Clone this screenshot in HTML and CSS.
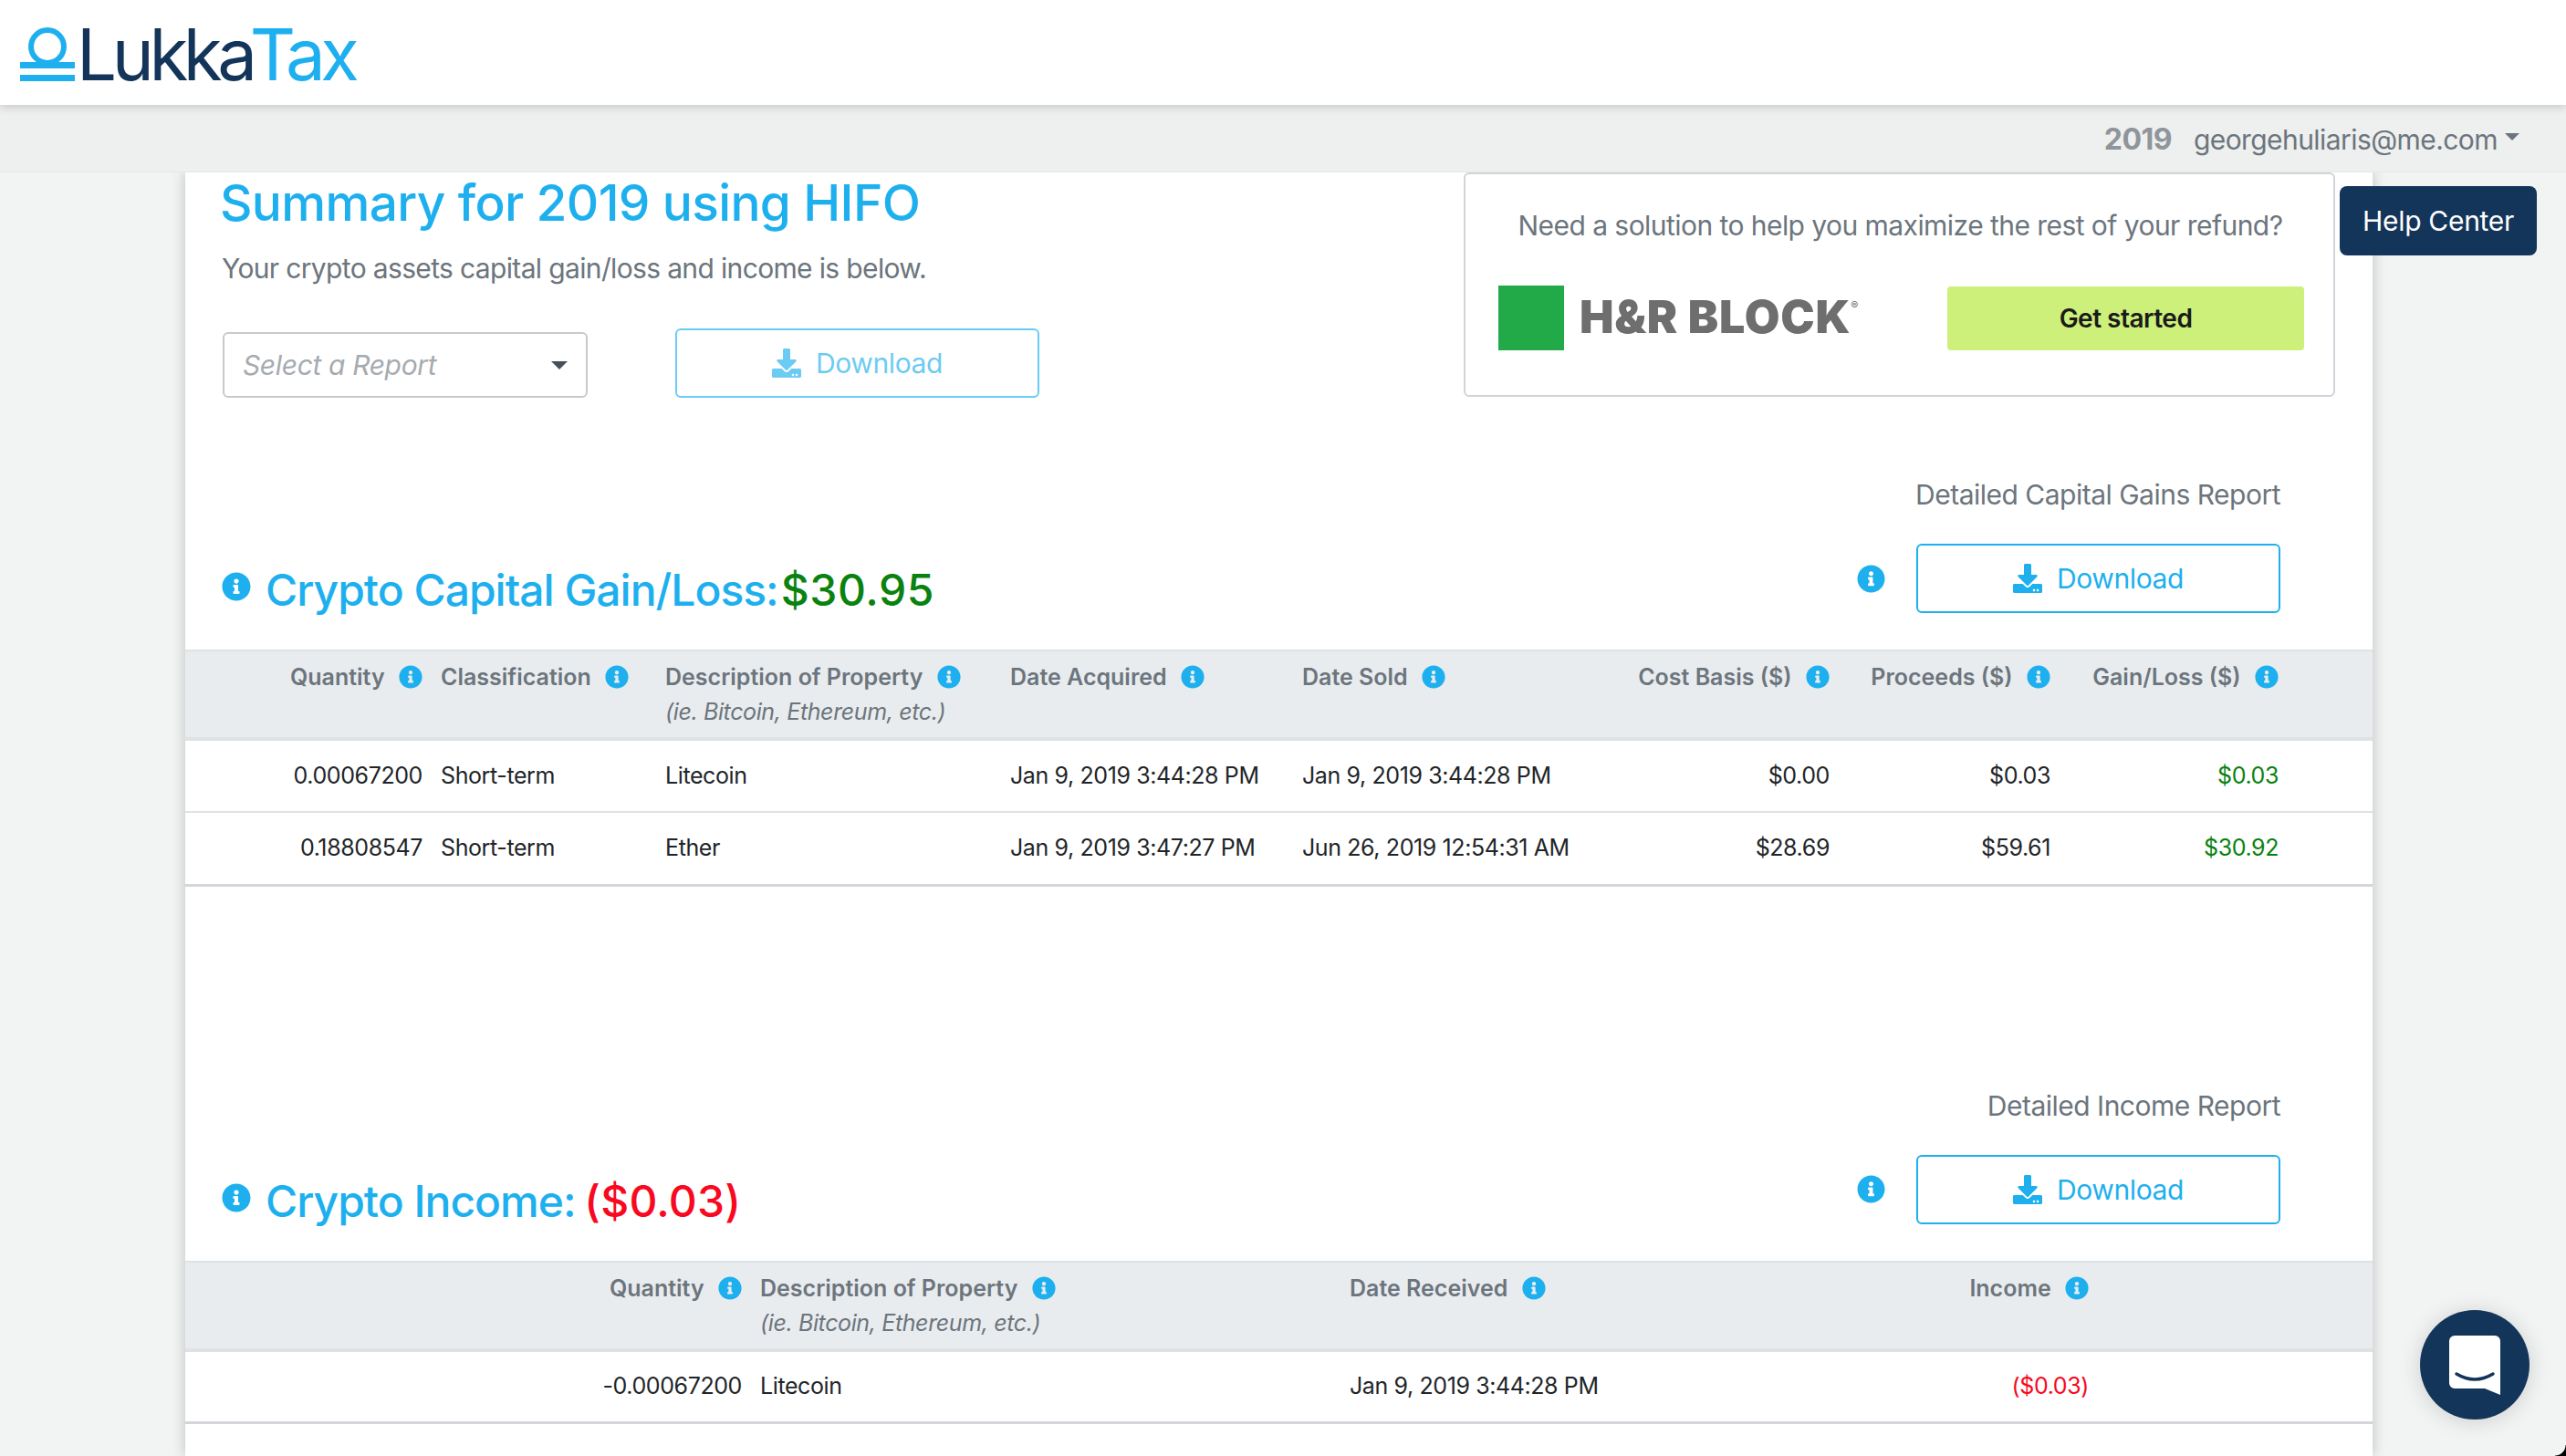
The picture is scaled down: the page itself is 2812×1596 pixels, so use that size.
FILE: index.html
```html
<!DOCTYPE html>
<html lang="en">
<head>
    <meta charset="UTF-8">
    <meta name="viewport" content="width=device-width, initial-scale=1.0">
    <title>LukkaTax</title>
    <link rel="stylesheet" href="styles.css">
</head>
<body>
    <svg class="defs" width="0" height="0">
        <symbol id="info" viewBox="0 0 512 512"><path d="M256 8C119.043 8 8 119.083 8 256c0 136.997 111.043 248 248 248s248-111.003 248-248C504 119.083 392.957 8 256 8zm0 110c23.196 0 42 18.804 42 42s-18.804 42-42 42-42-18.804-42-42 18.804-42 42-42zm56 254c0 6.627-5.373 12-12 12h-88c-6.627 0-12-5.373-12-12v-24c0-6.627 5.373-12 12-12h12v-64h-12c-6.627 0-12-5.373-12-12v-24c0-6.627 5.373-12 12-12h64c6.627 0 12 5.373 12 12v100h12c6.627 0 12 5.373 12 12v24z"/></symbol>
        <symbol id="download" viewBox="0 0 512 512"><path d="M216 0h80c13.3 0 24 10.7 24 24v168h87.7c17.8 0 26.7 21.5 14.1 34.1L269.7 378.3c-7.5 7.5-19.8 7.5-27.3 0L90.1 226.1c-12.6-12.6-3.7-34.1 14.1-34.1H192V24c0-13.3 10.7-24 24-24zm296 376v112c0 13.3-10.7 24-24 24H24c-13.3 0-24-10.7-24-24V376c0-13.3 10.7-24 24-24h146.7l49 49c20.1 20.1 52.5 20.1 72.6 0l49-49H488c13.3 0 24 10.7 24 24zm-124 88c0-11-9-20-20-20s-20 9-20 20 9 20 20 20 20-9 20-20zm64 0c0-11-9-20-20-20s-20 9-20 20 9 20 20 20 20-9 20-20z"/></symbol>
    </svg>

    <header class="brand-bar">
        <a class="logo">
            <svg class="logo-mark" viewBox="0 0 60 59">
                <circle cx="30" cy="21" r="18" fill="none" stroke="#1eb0ee" stroke-width="6"/>
                <rect x="0" y="38" width="60" height="7" fill="#1eb0ee"/>
                <rect x="0" y="52" width="60" height="7" fill="#1eb0ee"/>
            </svg>
            <span class="logo-text">Lukka<span class="logo-tax">Tax</span></span>
        </a>
    </header>

    <nav class="user-bar">
        <span class="user-year">2019</span>
        <span class="user-email">georgehuliaris@me.com</span>
        <span class="caret"></span>
    </nav>

    <main class="card">
        <div class="summary">
            <div class="summary-left">
                <h1 class="title">Summary for 2019 using HIFO</h1>
                <p class="lead">Your crypto assets capital gain/loss and income is below.</p>
                <div class="report-row">
                    <div class="select">
                        <span>Select a Report</span>
                        <span class="select-arrow"></span>
                    </div>
                    <button class="btn btn-disabled"><svg class="btn-icon"><use href="#download"/></svg>Download</button>
                </div>
            </div>
            <aside class="promo">
                <p class="promo-text">Need a solution to help you maximize the rest of your refund?</p>
                <div class="promo-row">
                    <div class="hrb">
                        <span class="hrb-square"></span>
                        <span class="hrb-name">H&amp;R BLOCK<sup>®</sup></span>
                    </div>
                    <button class="promo-btn">Get started</button>
                </div>
            </aside>
        </div>

        <section class="section section-gains">
            <div class="section-head">
                <h2 class="heading"><svg class="icon heading-icon"><use href="#info"/></svg>Crypto Capital Gain/Loss:<span class="gain">$30.95</span></h2>
                <div class="section-actions">
                    <div class="action-label">Detailed Capital Gains Report</div>
                    <div class="action-row">
                        <svg class="icon action-icon"><use href="#info"/></svg>
                        <button class="btn"><svg class="btn-icon"><use href="#download"/></svg>Download</button>
                    </div>
                </div>
            </div>
            <table class="table table-gains">
                <colgroup>
                    <col class="c270"><col class="c246"><col class="c378"><col class="c320"><col class="c350"><col class="c248"><col class="c242"><col class="c250"><col>
                </colgroup>
                <thead>
                    <tr>
                        <th class="right">Quantity <svg class="icon th-icon"><use href="#info"/></svg></th>
                        <th>Classification <svg class="icon th-icon"><use href="#info"/></svg></th>
                        <th>Description of Property <svg class="icon th-icon"><use href="#info"/></svg><em>(ie. Bitcoin, Ethereum, etc.)</em></th>
                        <th>Date Acquired <svg class="icon th-icon"><use href="#info"/></svg></th>
                        <th>Date Sold <svg class="icon th-icon"><use href="#info"/></svg></th>
                        <th class="right">Cost Basis ($) <svg class="icon th-icon"><use href="#info"/></svg></th>
                        <th class="right">Proceeds ($) <svg class="icon th-icon"><use href="#info"/></svg></th>
                        <th class="right">Gain/Loss ($) <svg class="icon th-icon"><use href="#info"/></svg></th>
                        <th></th>
                    </tr>
                </thead>
                <tbody>
                    <tr>
                        <td class="right">0.00067200</td>
                        <td>Short-term</td>
                        <td>Litecoin</td>
                        <td>Jan 9, 2019 3:44:28 PM</td>
                        <td>Jan 9, 2019 3:44:28 PM</td>
                        <td class="right">$0.00</td>
                        <td class="right">$0.03</td>
                        <td class="right gain">$0.03</td>
                        <td></td>
                    </tr>
                    <tr>
                        <td class="right">0.18808547</td>
                        <td>Short-term</td>
                        <td>Ether</td>
                        <td>Jan 9, 2019 3:47:27 PM</td>
                        <td>Jun 26, 2019 12:54:31 AM</td>
                        <td class="right">$28.69</td>
                        <td class="right">$59.61</td>
                        <td class="right gain">$30.92</td>
                        <td></td>
                    </tr>
                </tbody>
            </table>
        </section>

        <section class="section section-income">
            <div class="section-head">
                <h2 class="heading"><svg class="icon heading-icon"><use href="#info"/></svg>Crypto Income: <span class="loss">($0.03)</span></h2>
                <div class="section-actions">
                    <div class="action-label">Detailed Income Report</div>
                    <div class="action-row">
                        <svg class="icon action-icon"><use href="#info"/></svg>
                        <button class="btn"><svg class="btn-icon"><use href="#download"/></svg>Download</button>
                    </div>
                </div>
            </div>
            <table class="table table-income">
                <colgroup>
                    <col class="c620"><col class="c646"><col class="c430"><col class="c400"><col>
                </colgroup>
                <thead>
                    <tr>
                        <th class="right">Quantity <svg class="icon th-icon"><use href="#info"/></svg></th>
                        <th>Description of Property <svg class="icon th-icon"><use href="#info"/></svg><em>(ie. Bitcoin, Ethereum, etc.)</em></th>
                        <th>Date Received <svg class="icon th-icon"><use href="#info"/></svg></th>
                        <th class="right">Income <svg class="icon th-icon"><use href="#info"/></svg></th>
                        <th></th>
                    </tr>
                </thead>
                <tbody>
                    <tr>
                        <td class="right">-0.00067200</td>
                        <td>Litecoin</td>
                        <td>Jan 9, 2019 3:44:28 PM</td>
                        <td class="right loss">($0.03)</td>
                        <td></td>
                    </tr>
                </tbody>
            </table>
        </section>
    </main>

    <button class="help-center">Help Center</button>

    <div class="chat">
        <svg class="chat-icon" viewBox="0 0 56 65">
            <path d="M6 0h44a6 6 0 0 1 6 6v59L39 58H6a6 6 0 0 1-6-6V6a6 6 0 0 1 6-6z" fill="#fff"/>
            <path d="M8 42Q28 54 48 42" fill="none" stroke="#14355a" stroke-width="3.5" stroke-linecap="round"/>
        </svg>
    </div>
    <div class="window-corner"></div>
</body>
</html>
```

FILE: styles.css
```css
* {
    box-sizing: border-box;
}
html, body {
    height: 100%;
}
body {
    margin: 0;
    overflow: hidden;
    font-family: Inter, "Liberation Sans", sans-serif;
    background: #f2f4f3;
    color: #212529;
}
.defs {
    position: absolute;
}
.icon {
    fill: #1eb0ee;
}

/* top bars */
.brand-bar {
    position: relative;
    z-index: 3;
    height: 115px;
    background: #fff;
    box-shadow: 0 2px 10px rgba(0, 0, 0, .18);
    padding: 30px 0 0 22px;
}
.logo {
    display: flex;
    align-items: flex-end;
}
.logo-mark {
    width: 60px;
    height: 59px;
}
.logo-text {
    margin-left: 2px;
    font-size: 78px;
    line-height: 59px;
    font-weight: 400;
    letter-spacing: -5.4px;
    color: #14355a;
}
.logo-tax {
    margin-left: -3px;
    color: #1eb0ee;
}
.user-bar {
    position: relative;
    z-index: 2;
    height: 74px;
    background: #eeefef;
    border-bottom: 1px solid #e6e7e7;
    display: flex;
    align-items: center;
    justify-content: flex-end;
    padding: 2px 51px 0 0;
    font-size: 30px;
    letter-spacing: -.57px;
    color: #6c757d;
}
.user-year {
    font-size: 32px;
    font-weight: 700;
    color: #8f959b;
    margin-right: 24px;
}
.caret {
    margin: -6px 0 0 8px;
    border-top: 8px solid #6c757d;
    border-left: 8px solid transparent;
    border-right: 8px solid transparent;
}

/* card */
.card {
    margin-left: 203px;
    width: 2397px;
    height: 1407px;
    overflow: hidden;
    background: #fff;
    box-shadow: 0 0 14px rgba(0, 0, 0, .22);
}
.summary {
    display: flex;
    justify-content: space-between;
    height: 246px;
    padding: 0 41px 0 40px;
}
.title {
    margin: 0 0 0 -2px;
    padding-top: 3px;
    font-size: 55px;
    line-height: 60px;
    font-weight: 500;
    letter-spacing: -.66px;
    color: #1eb0ee;
}
.lead {
    margin: 24px 0 0;
    font-size: 30px;
    line-height: 36px;
    letter-spacing: -.65px;
    color: #6c757d;
}
.report-row {
    display: flex;
    align-items: flex-end;
    margin-top: 48px;
    gap: 96px;
}
.select {
    width: 400px;
    height: 72px;
    margin-left: 1px;
    border: 2px solid #c8c9ca;
    border-radius: 6px;
    display: flex;
    align-items: center;
    justify-content: space-between;
    padding: 0 20px;
    font-size: 30px;
    font-style: italic;
    letter-spacing: -.35px;
    color: #a6abb0;
}
.select-arrow {
    border-top: 9px solid #495057;
    border-left: 9px solid transparent;
    border-right: 9px solid transparent;
}
.btn {
    width: 399px;
    height: 76px;
    border: 2px solid #1eb0ee;
    border-radius: 6px;
    background: #fff;
    color: #1eb0ee;
    font-family: inherit;
    font-size: 30px;
    letter-spacing: -.4px;
    display: flex;
    align-items: center;
    justify-content: center;
    padding: 0;
}
.btn-disabled {
    opacity: .65;
}
.btn-icon {
    width: 32px;
    height: 32px;
    margin-right: 16px;
    fill: #1eb0ee;
}

/* promo box */
.promo {
    width: 955px;
    height: 246px;
    border: 2px solid #d0d4d8;
    border-radius: 6px;
    padding: 0 32px 0 34px;
}
.promo-text {
    margin: 38px 0 0;
    font-size: 30px;
    line-height: 36px;
    letter-spacing: -.55px;
    text-align: center;
    color: #6c757d;
}
.promo-row {
    display: flex;
    justify-content: space-between;
    align-items: center;
    margin-top: 48px;
}
.hrb {
    display: flex;
    align-items: center;
    margin-left: 2px;
}
.hrb-square {
    width: 72px;
    height: 71px;
    background: #22aa48;
}
.hrb-name {
    margin: -3px 0 0 17px;
    font-size: 50px;
    font-weight: 900;
    letter-spacing: .8px;
    color: #6e6e6e;
    white-space: nowrap;
}
.hrb-name sup {
    font-size: 12px;
    font-weight: 400;
    vertical-align: 26px;
    line-height: 0;
}
.promo-btn {
    width: 391px;
    height: 70px;
    border: 0;
    border-radius: 4px;
    background: #cdf07a;
    color: #1a1a1a;
    font-family: inherit;
    font-size: 28px;
    font-weight: 600;
    letter-spacing: -.5px;
}

/* sections */
.section-gains {
    margin-top: 89px;
}
.section-income {
    margin-top: 222px;
}
.section-head {
    display: flex;
    justify-content: space-between;
    align-items: flex-end;
    padding: 0 101px 40px 40px;
}
.heading {
    margin: 0 0 -4px;
    display: flex;
    align-items: center;
    font-size: 48px;
    line-height: 58px;
    font-weight: 500;
    letter-spacing: -1px;
    color: #1eb0ee;
    white-space: pre;
}
.heading-icon {
    width: 32px;
    height: 32px;
    margin: 0 16px 8px 0;
}
.heading .gain {
    margin-left: 3px;
    letter-spacing: .6px;
}
.heading .loss {
    margin-left: -2px;
    letter-spacing: .2px;
}
.gain {
    color: #0a820f;
}
.loss {
    color: #f8091f;
}
.section-actions {
    text-align: right;
}
.action-label {
    font-size: 30px;
    line-height: 36px;
    letter-spacing: -.5px;
    color: #6c757d;
    margin-bottom: 36px;
}
.action-row {
    display: flex;
    align-items: center;
    gap: 34px;
}
.action-icon {
    width: 31px;
    height: 31px;
}

/* tables */
.table {
    width: 100%;
    border-collapse: collapse;
    table-layout: fixed;
    font-size: 25px;
}
.c270 { width: 270px; }
.c246 { width: 246px; }
.c378 { width: 378px; }
.c320 { width: 320px; }
.c350 { width: 350px; }
.c248 { width: 248px; }
.c242 { width: 242px; }
.c250 { width: 250px; }
.c620 { width: 620px; }
.c646 { width: 646px; }
.c430 { width: 430px; }
.c400 { width: 400px; }
.table th {
    height: 97px;
    padding: 10px 10px 0;
    vertical-align: top;
    text-align: left;
    font-weight: 600;
    line-height: 36px;
    color: #6c757d;
    background: #e9ecef;
    border-top: 2px solid #dee2e6;
    border-bottom: 4px solid #dee2e6;
    white-space: nowrap;
}
.table th em {
    display: block;
    font-weight: 400;
    line-height: 40px;
    letter-spacing: -.38px;
}
.table td {
    height: 80px;
    padding: 0 10px 2px;
    border-bottom: 2px solid #dee2e6;
    letter-spacing: -.4px;
    white-space: nowrap;
}
.table tr:last-child td {
    border-bottom: 3px solid #d3d6da;
}
.table .right {
    text-align: right;
}
.table .gain {
    color: #0a820f;
}
.table .loss {
    color: #f8091f;
}
.th-icon {
    width: 26px;
    height: 26px;
    margin-left: 9px;
    vertical-align: -4px;
}

/* floating stuff */
.help-center {
    position: fixed;
    top: 204px;
    left: 2564px;
    width: 216px;
    height: 76px;
    border: 0;
    border-radius: 8px;
    background: #14355a;
    color: #fff;
    font-family: inherit;
    font-size: 30px;
    letter-spacing: -.3px;
}
.chat {
    position: fixed;
    top: 1436px;
    left: 2652px;
    width: 120px;
    height: 120px;
    border-radius: 50%;
    background: #14355a;
    box-shadow: 0 2px 24px rgba(0, 0, 0, .15);
    display: flex;
    align-items: center;
    justify-content: center;
}
.chat-icon {
    width: 56px;
    height: 65px;
}
.window-corner {
    position: fixed;
    right: 0;
    bottom: 0;
    width: 12px;
    height: 12px;
    background: radial-gradient(circle at 0 0, transparent 11px, #000 12px);
}
```
